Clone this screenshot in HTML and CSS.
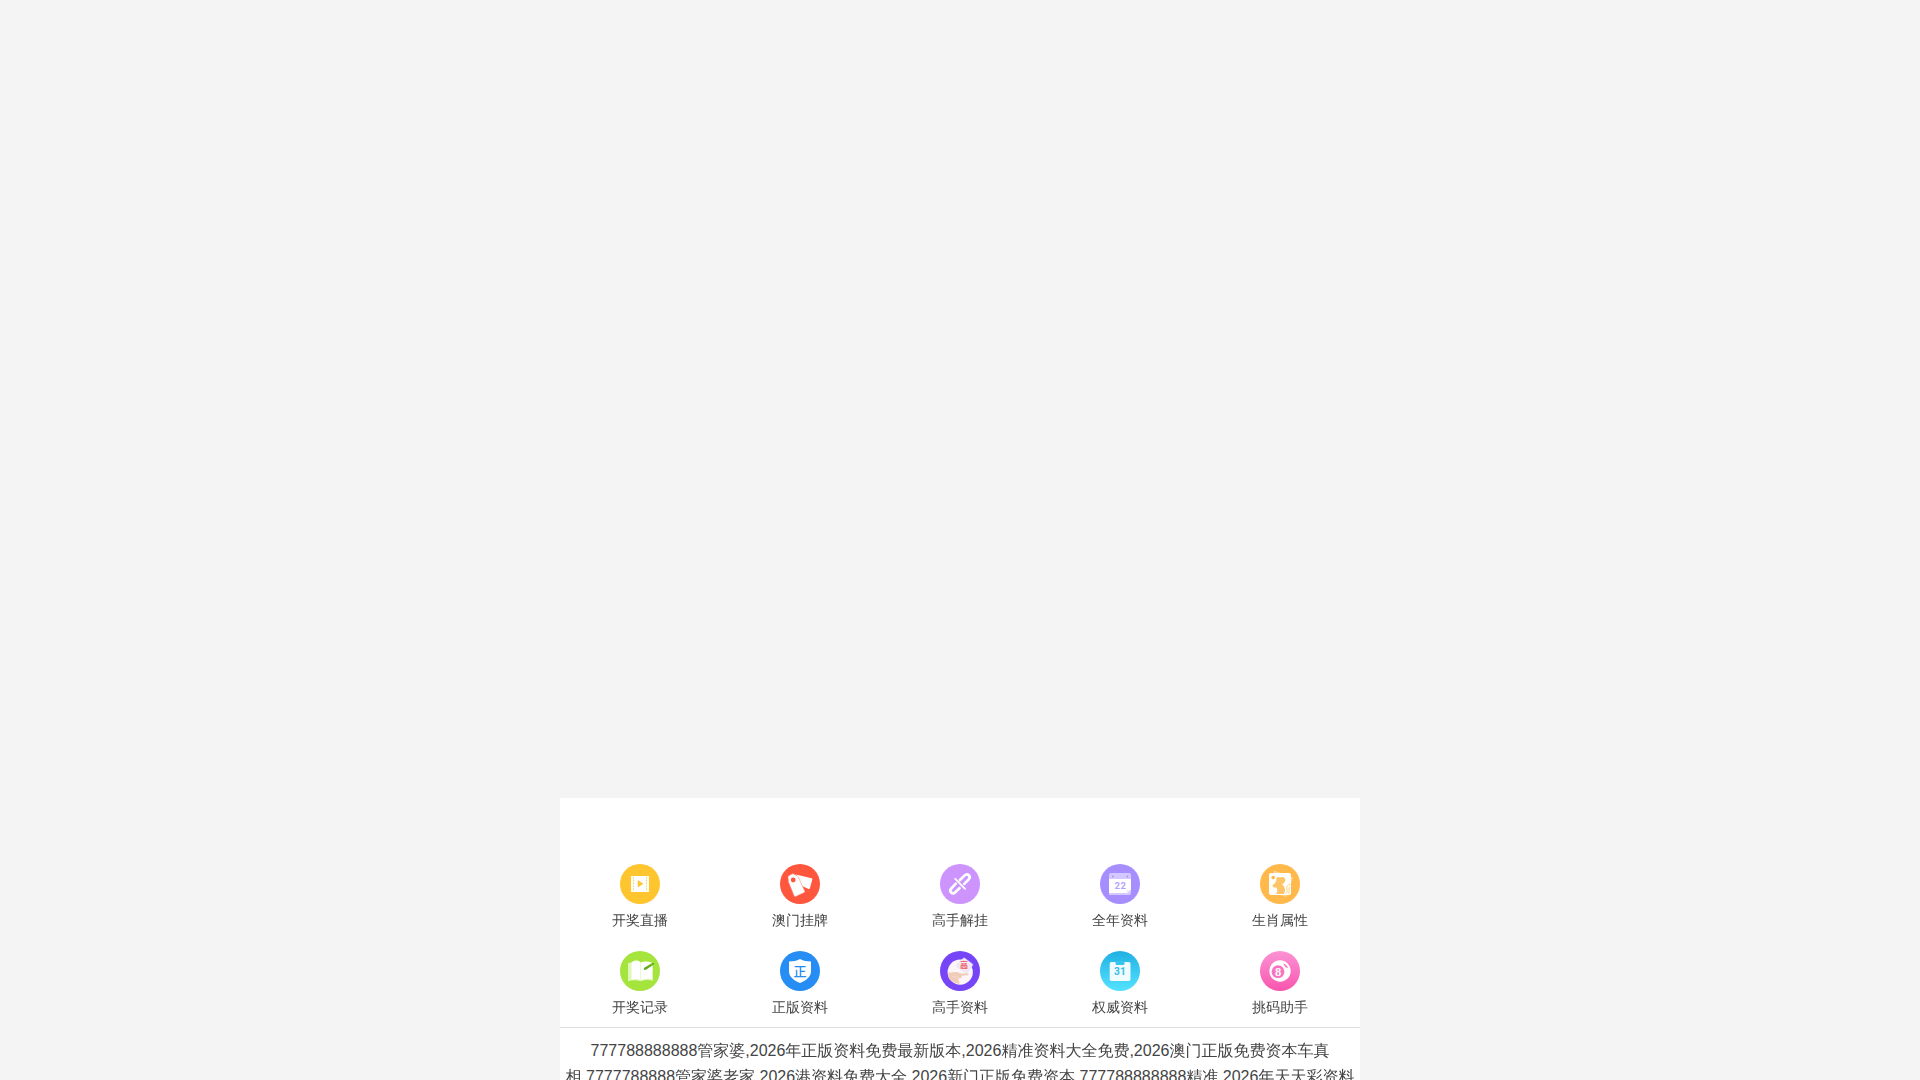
FILE: index.html
```html
<!DOCTYPE html>
<html lang="zh-CN">
<head>
<meta charset="utf-8">
<title>资料大全</title>
<link rel="stylesheet" href="styles.css">
</head>
<body>
<main class="panel">
<nav class="menu">
<a class="item"><svg class="icon" viewBox="0 0 40 40"><circle cx="20" cy="20" r="20" fill="#ffc52e"/><rect x="11" y="12" width="18" height="16" rx=".7" fill="#fff"/><path d="M13.5 13v14M26.5 13v14" stroke="#ffd46a" stroke-width="1.1" stroke-dasharray="1.7 1.1"/><path d="M17.8 16v7.4l5.5-3.7z" fill="#ffc52e"/></svg><span>开奖直播</span></a>
<a class="item"><svg class="icon" viewBox="0 0 40 40"><circle cx="20" cy="20" r="20" fill="#ff573d"/><path d="M16 10.5l15.5 3.8c.8.2 1 .7.8 1.3l-2.4 8.6c-.2.7-.7.9-1.3.7L22 22z" fill="#fff"/><path d="M8 13.3c-.1-.7.2-1.2.8-1.5l3.3-1.9c.6-.3 1.2-.3 1.8.1l3.5 2c.5.3.8.7 1 1.2l6.3 13.8c.3.7.1 1.2-.5 1.5l-8.5 4c-.7.3-1.2 0-1.5-.6L8.5 18z" fill="#fff" stroke="#ff806c" stroke-width=".5"/><circle cx="13.2" cy="16" r="2.4" fill="#ff573d"/></svg><span>澳门挂牌</span></a>
<a class="item"><svg class="icon" viewBox="0 0 40 40"><circle cx="20" cy="20" r="20" fill="#cc94fc"/><g fill="none" stroke="#fff" stroke-width="2.7" stroke-linecap="round"><path d="M19.8 16.2l4.8-4.8c3-2.8 6.8 1 4.1 3.9l-4.4 4.6M15.8 19.7l-4.5 4.8c-2.7 3 1.1 6.4 4 3.7l4.3-4.1"/><path d="M15.2 14.8l9.9 10.1" stroke-width="1.8"/></g></svg><span>高手解挂</span></a>
<a class="item"><svg class="icon" viewBox="0 0 40 40"><circle cx="20" cy="20" r="20" fill="#a78eff"/><path d="M9 11q0-2 2-2h18q2 0 2 2v4H9z" fill="#d4c8ff"/><path d="M9 15h22v10.5L26.5 31H11q-2 0-2-2z" fill="#fff"/><path d="M9 29h18.5l3.5-3v3q0 2-2 2H11q-2 0-2-2z" fill="#d4c8ff"/><path d="M26.5 30v-2.8q0-1 1-1H31z" fill="#eee9ff"/><circle cx="12.8" cy="12.5" r=".9" fill="#a78eff"/><circle cx="27.4" cy="12.5" r=".9" fill="#a78eff"/><text x="20.5" y="24.8" class="cal22">22</text></svg><span>全年资料</span></a>
<a class="item"><svg class="icon" viewBox="0 0 40 40"><circle cx="20" cy="20" r="20" fill="#ffb94a"/><path d="M14 6.6l19 7-6.8 19.4L10 27z" fill="#ffd58e"/><rect x="9" y="9" width="22" height="22" rx="2" fill="#fff"/><circle cx="13.2" cy="13.6" r="1.8" fill="#ffb94a"/><path d="M12.3 21.4l3.2-2.8.8-1.8c-.6-3 1.8-4.7 3.7-3.2 3.8-1.8 6.7 1.4 4.6 4.7-.8 1.2-2.2 1.3-2.2 2.5 3 2.2 3.4 6.5 1.5 9.2h-8c2.2-2.2 1.4-4.8.7-6.6l-2.8.1z" fill="#ffc468"/><path d="M25.5 29.5c3.2-1.4.2-5.4 1.8-7.8.8-1.1 1.7-1.4 3.3-1.2M28.3 29.7c2-2.3-.5-5 1.7-6.7" fill="none" stroke="#ffc468" stroke-width=".8"/></svg><span>生肖属性</span></a>
<a class="item"><svg class="icon" viewBox="0 0 40 40"><circle cx="20" cy="20" r="20" fill="#a4e43d"/><path d="M8 12l3.4-.5 9.3 15.8 8-1.4L33 12.4v17.4c-5-1-8.5-1-12.2.5-4.4-1.3-8.2-1.4-12.8-.1z" fill="#def6b7"/><path d="M11.5 11.2c3.5-2.4 6.5-2.1 9.2.2 3.5-1.3 7.2-1.5 11.3.3v16.5c-4-.9-8-.5-11.3 1.1-2.7-1.5-5.7-1.6-9.2-.6z" fill="#fff"/><path d="M20.7 11.5v18" stroke="#def6b7" stroke-width=".8"/><path d="M23.5 18.8l.7-2 8.1-4.8c.8-.4 2.2.3 2.1 1.1L26 18.7z" fill="#61ad17"/><path d="M31.2 12.8l1.7 2" stroke="#a4e43d" stroke-width=".6"/></svg><span>开奖记录</span></a>
<a class="item"><svg class="icon" viewBox="0 0 40 40"><circle cx="20" cy="20" r="20" fill="#258df3"/><path d="M9 10.6c4.1-.2 7.6-.7 11-2.6 3.4 1.9 6.9 2.4 11 2.6v9.7c0 5.7-5 9.3-11 11.7C14 29.6 9 26 9 20.3z" fill="#fff"/><text x="20" y="24.9" class="zheng">正</text></svg><span>正版资料</span></a>
<a class="item"><svg class="icon" viewBox="0 0 40 40"><circle cx="20" cy="20" r="20" fill="#7745f8"/><circle cx="20.2" cy="21.2" r="12.6" fill="#fcf6f8"/><path d="M8 21.8l8.3-.8c2.4 0 3 1.5 4.7 1.4l6.8-.2c1.5.5.9 1.9-.5 2l-5.5.5c.4 2-1 3-3.8 3l1.8 4.9C13.3 33 7.6 29 8 21.8z" fill="#f1cdb9"/><path d="M12 25.5c3.5-.6 4 1.2 7 1.3" fill="none" stroke="#f6dbce" stroke-width=".9"/><path d="M16.5 13.5l6.6-6.1c.7-.5 1.4-.5 2 0l7.1 5.3c.6.5.7 1.2.3 2L27.4 21.2c-.5.6-1.1.7-1.9.4l-8.7-5.6z" fill="#eee9f4" stroke="#e5e0ec" stroke-width=".5"/><text x="24" y="16.8" class="gao">高</text></svg><span>高手资料</span></a>
<a class="item"><svg class="icon" viewBox="0 0 40 40"><defs><linearGradient id="blue" x2="0" y2="1"><stop stop-color="#20b1e3"/><stop offset="1" stop-color="#55e2ff"/></linearGradient></defs><circle cx="20" cy="20" r="20" fill="url(#blue)"/><rect x="9.7" y="11" width="20.8" height="19" rx="1.8" fill="#f0fcff"/><path d="M15.5 10h9v2.7q0 1.2-1.2 1.2h-6.6q-1.2 0-1.2-1.2z" fill="#35c5ed"/><text x="19.9" y="24" class="cal31">31</text></svg><span>权威资料</span></a>
<a class="item"><svg class="icon" viewBox="0 0 40 40"><defs><linearGradient id="pink" x2="0" y2="1"><stop stop-color="#fc93d5"/><stop offset="1" stop-color="#f855ae"/></linearGradient></defs><circle cx="20" cy="20" r="20" fill="url(#pink)"/><circle cx="20" cy="20" r="10.7" fill="#fff"/><circle cx="18" cy="20.7" r="6.4" fill="#fa72c0"/><path d="M23.3 12.5c2.5.7 4 2.2 4.6 4.6-1.7-.2-3.8-2-4.6-4.6z" fill="#fa72c0"/><text x="18" y="24.8" class="ball">8</text></svg><span>挑码助手</span></a>
</nav>
<p class="keywords">777788888888管家婆,2026年正版资料免费最新版本,2026精准资料大全免费,2026澳门正版免费资本车真相,7777788888管家婆老家,2026港资料免费大全,2026新门正版免费资本,777788888888精准,2026年天天彩资料</p>
</main>
</body>
</html>
```
FILE: styles.css
```css
* {
  box-sizing: border-box;
}

body {
  height: 100vh;
  margin: 0;
  padding-top: 798px;
  overflow: hidden;
  background: #f4f4f4;
  color: #444;
  font-family: "Liberation Sans", "WenQuanYi Zen Hei", "Droid Sans Fallback", sans-serif;
}

.panel {
  width: 800px;
  margin: 0 auto;
  padding-top: 66px;
  background: #fff;
}

.menu {
  display: grid;
  grid-template-columns: repeat(5, 1fr);
  grid-auto-rows: 87px;
  height: 164px;
  border-bottom: 1px solid #ddd;
}

.item {
  display: flex;
  flex-direction: column;
  align-items: center;
  gap: 6px;
  font-size: 14px;
  line-height: 20px;
}

.icon {
  width: 40px;
  height: 40px;
}

.icon text {
  text-anchor: middle;
}

.cal22 {
  fill: #b5a1ff;
  font: bold 9.5px Roboto, sans-serif;
  letter-spacing: 0.6px;
}

.zheng {
  fill: #258df3;
  font: 500 13px "Noto Sans CJK SC", sans-serif;
}

.gao {
  fill: #f25561;
  font: bold 8px "Noto Sans CJK SC", sans-serif;
}

.cal31 {
  fill: #36bfe9;
  font: bold 10.2px Roboto, sans-serif;
}

.ball {
  fill: #fff;
  font: bold 12.5px "Liberation Serif", serif;
}

.keywords {
  margin: 0;
  padding: 10px 5px;
  font-size: 16px;
  line-height: 26px;
  text-align: center;
}
```
